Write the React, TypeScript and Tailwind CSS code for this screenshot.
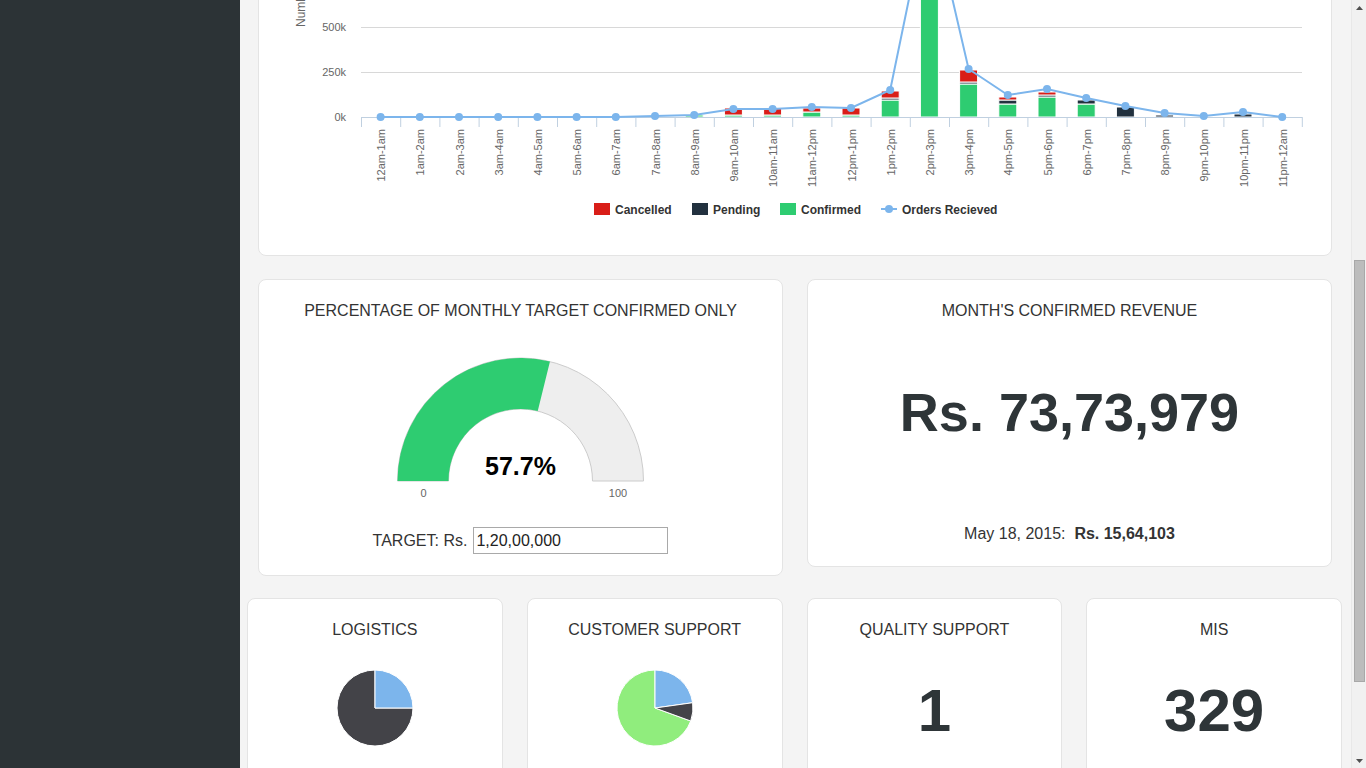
import React from "react";

const cats = [
  "12am-1am", "1am-2am", "2am-3am", "3am-4am", "4am-5am", "5am-6am",
  "6am-7am", "7am-8am", "8am-9am", "9am-10am", "10am-11am", "11am-12pm",
  "12pm-1pm", "1pm-2pm", "2pm-3pm", "3pm-4pm", "4pm-5pm", "5pm-6pm",
  "6pm-7pm", "7pm-8pm", "8pm-9pm", "9pm-10pm", "10pm-11pm", "11pm-12am",
];

// [confirmed, pending, cancelled] heights in px
const bars = [
  [0, 0, 0], [0, 0, 0], [0, 0, 0], [0, 0, 0], [0, 0, 0], [0, 0, 0],
  [0, 0, 0], [0, 0, 0], [2, 0, 0], [2, 0, 7], [2, 0, 7], [5, 0, 4],
  [2, 0, 7], [17, 2, 7], [200, 0, 0], [33, 2, 12], [13, 4, 3], [20, 2, 3],
  [13, 4, 0], [0, 10, 0], [0, 2, 0], [0, 0, 0], [0, 3, 0], [0, 0, 0],
];

const orders = [117, 117, 117, 117, 117, 117, 117, 116, 115, 109, 109, 107, 108, 90, -100, 69, 95, 89, 98, 106, 113, 116, 112, 117];

const BASE = 117;
const cx = (i: number) => 380.6 + 39.2 * i;

const HourlyChart = () => {
  const line = orders.map((y, i) => `${i === 0 ? "M" : "L"}${cx(i)} ${y}`).join(" ");
  return (
    <svg width={1072} height={404} viewBox="259 -149 1072 404" className="block">
      <line x1={361} x2={1302} y1={27.5} y2={27.5} stroke="#d8d8d8" />
      <line x1={361} x2={1302} y1={72.5} y2={72.5} stroke="#d8d8d8" />
      <text x={346} y={31} fontSize={11} fill="#666" textAnchor="end">500k</text>
      <text x={346} y={76} fontSize={11} fill="#666" textAnchor="end">250k</text>
      <text x={346} y={121} fontSize={11} fill="#666" textAnchor="end">0k</text>
      <text x={305} y={27} fontSize={12} fill="#666" transform="rotate(-90 305 27)">Number of Orders</text>

      {bars.map(([g, d, r], i) => {
        const x = cx(i) - 9;
        const out: React.ReactNode[] = [];
        let top = BASE;
        if (g) {
          top -= g;
          out.push(<rect key="g" x={x} y={top} width={18} height={g} fill="#2ecc71" stroke="#fff" strokeWidth={1} />);
        }
        if (d) {
          top -= d;
          out.push(<rect key="d" x={x} y={top} width={18} height={d} fill="#22313f" stroke="#fff" strokeWidth={1} />);
        }
        if (r) {
          top -= r;
          out.push(<rect key="r" x={x} y={top} width={18} height={r} fill="#d91e18" stroke="#fff" strokeWidth={1} />);
        }
        return <g key={i}>{out}</g>;
      })}

      <line x1={361} x2={1302} y1={117.5} y2={117.5} stroke="#c0d0e0" />
      {Array.from({ length: 25 }).map((_, k) => (
        <line key={k} x1={361.5 + 39.2 * k} x2={361.5 + 39.2 * k} y1={117} y2={127} stroke="#c0d0e0" />
      ))}

      <path d={line} fill="none" stroke="#7cb5ec" strokeWidth={2} />
      {orders.map((y, i) => (
        <circle key={i} cx={cx(i)} cy={y} r={4} fill="#7cb5ec" />
      ))}

      {cats.map((c, i) => (
        <text
          key={c}
          x={cx(i) + 4.5}
          y={129}
          fontSize={11}
          fill="#666"
          textAnchor="end"
          transform={`rotate(-90 ${cx(i) + 4.5} 129)`}
        >
          {c}
        </text>
      ))}

      <g fontSize={12} fontWeight="bold" fill="#333">
        <rect x={594} y={203} width={16} height={12} fill="#d91e18" />
        <text x={615} y={214}>Cancelled</text>
        <rect x={692} y={203} width={16} height={12} fill="#22313f" />
        <text x={713} y={214}>Pending</text>
        <rect x={780} y={203} width={16} height={12} fill="#2ecc71" />
        <text x={801} y={214}>Confirmed</text>
        <line x1={881} x2={897} y1={209} y2={209} stroke="#7cb5ec" strokeWidth={2} />
        <circle cx={889} cy={209} r={4} fill="#7cb5ec" />
        <text x={902} y={214}>Orders Recieved</text>
      </g>
    </svg>
  );
};

const Gauge = () => (
  <svg width={261} height={152} viewBox="0 0 261 152" className="block mx-auto">
    <path d="M7.5 131 A123 123 0 0 1 253.5 131 L202.5 131 A72 72 0 0 0 58.5 131 Z" fill="#eeeeee" stroke="#cccccc" strokeWidth={1} />
    <path d="M7.5 131 A123 123 0 0 1 159.96 11.58 L147.75 61.1 A72 72 0 0 0 58.5 131 Z" fill="#2ecc71" />
    <text x={130.5} y={125} fontSize={25} fontWeight="bold" fill="#000" textAnchor="middle">57.7%</text>
    <text x={33.5} y={147} fontSize={11} fill="#666" textAnchor="middle">0</text>
    <text x={228} y={147} fontSize={11} fill="#666" textAnchor="middle">100</text>
  </svg>
);

const LogisticsPie = () => (
  <svg width={80} height={80} viewBox="0 0 80 80" className="block mx-auto">
    <path d="M40 40 L78 40 A38 38 0 1 1 40 2 Z" fill="#434348" stroke="#fff" strokeWidth={1} />
    <path d="M40 40 L40 2 A38 38 0 0 1 78 40 Z" fill="#7cb5ec" stroke="#fff" strokeWidth={1} />
  </svg>
);

const SupportPie = () => (
  <svg width={80} height={80} viewBox="0 0 80 80" className="block mx-auto">
    <path d="M40 40 L75.71 53 A38 38 0 1 1 40 2 Z" fill="#90ed7d" stroke="#fff" strokeWidth={1} />
    <path d="M40 40 L40 2 A38 38 0 0 1 77.63 34.71 Z" fill="#7cb5ec" stroke="#fff" strokeWidth={1} />
    <path d="M40 40 L77.63 34.71 A38 38 0 0 1 75.71 53 Z" fill="#434348" stroke="#fff" strokeWidth={1} />
  </svg>
);

const card = "bg-white border border-[#e4e4e4] rounded-lg";
const title = "text-center text-[16px] leading-[18px] text-[#333] uppercase";

const SmallCard = ({ name, children }: { name: string; children: React.ReactNode }) => (
  <div className={`${card} h-[230px] pt-[22px]`}>
    <div className={title}>{name}</div>
    {children}
  </div>
);

const Arrow = ({ up }: { up?: boolean }) => (
  <div className="h-[15px] flex items-center justify-center">
    <svg width={7} height={4} viewBox="0 0 7 4">
      <path d={up ? "M0 4 L3.5 0 L7 4 Z" : "M0 0 L3.5 4 L7 0 Z"} fill="#505050" />
    </svg>
  </div>
);

export default function App() {
  return (
    <div className="flex h-[768px] w-[1366px] overflow-hidden font-['Liberation_Sans',Arial,sans-serif]">
      <aside className="w-[240px] shrink-0 bg-[#2c3336]" />

      <main className="flex-1 bg-[#f4f4f4] overflow-hidden">
        <div className="-mt-[150px]">
          <div className={`${card} ml-[18px] mr-[19px] h-[406px] overflow-hidden`}>
            <HourlyChart />
          </div>

          <div className="grid grid-cols-2 gap-6 items-start ml-[18px] mr-[19px] mt-[23px]">
            <div className={`${card} pt-[22px] pb-[21px]`}>
              <div className={title}>Percentage of monthly target confirmed only</div>
              <div className="mt-[30px]">
                <Gauge />
              </div>
              <div className="mt-[25px] flex items-center justify-center h-[27px] text-[16px] text-[#333]">
                <span>TARGET: Rs.</span>
                <input
                  readOnly
                  defaultValue="1,20,00,000"
                  className="ml-[6px] w-[195px] h-[27px] border border-[#a9a9a9] px-[2px] text-[16px] text-[#222] outline-none"
                />
              </div>
            </div>

            <div className={`${card} pt-[22px] pb-[23px]`}>
              <div className={title}>Month's confirmed revenue</div>
              <div className="mt-[65px] text-center text-[54px] leading-[54px] font-bold text-[#2e3538]">
                Rs. 73,73,979
              </div>
              <div className="mt-[86px] text-center text-[16px] leading-[18px] text-[#333]">
                May 18, 2015:&nbsp; <span className="font-bold">Rs. 15,64,103</span>
              </div>
            </div>
          </div>

          <div className="grid grid-cols-4 gap-6 ml-[7px] mr-[9px] mt-[22px]">
            <SmallCard name="Logistics">
              <div className="mt-[29px]">
                <LogisticsPie />
              </div>
            </SmallCard>
            <SmallCard name="Customer Support">
              <div className="mt-[29px]">
                <SupportPie />
              </div>
            </SmallCard>
            <SmallCard name="Quality Support">
              <div className="mt-[42px] text-center text-[60px] leading-[60px] font-bold text-[#2e3538]">1</div>
            </SmallCard>
            <SmallCard name="MIS">
              <div className="mt-[42px] text-center text-[60px] leading-[60px] font-bold text-[#2e3538]">329</div>
            </SmallCard>
          </div>
        </div>
      </main>

      <div className="w-[15px] shrink-0 bg-[#f1f1f1] flex flex-col border-l border-[#e8e8e8]">
        <Arrow up />
        <div className="mt-[245px] mx-auto w-[11px] h-[422px] bg-[#bcbcbc] border border-[#a8a8a8]" />
        <div className="mt-auto">
          <Arrow />
        </div>
      </div>
    </div>
  );
}
